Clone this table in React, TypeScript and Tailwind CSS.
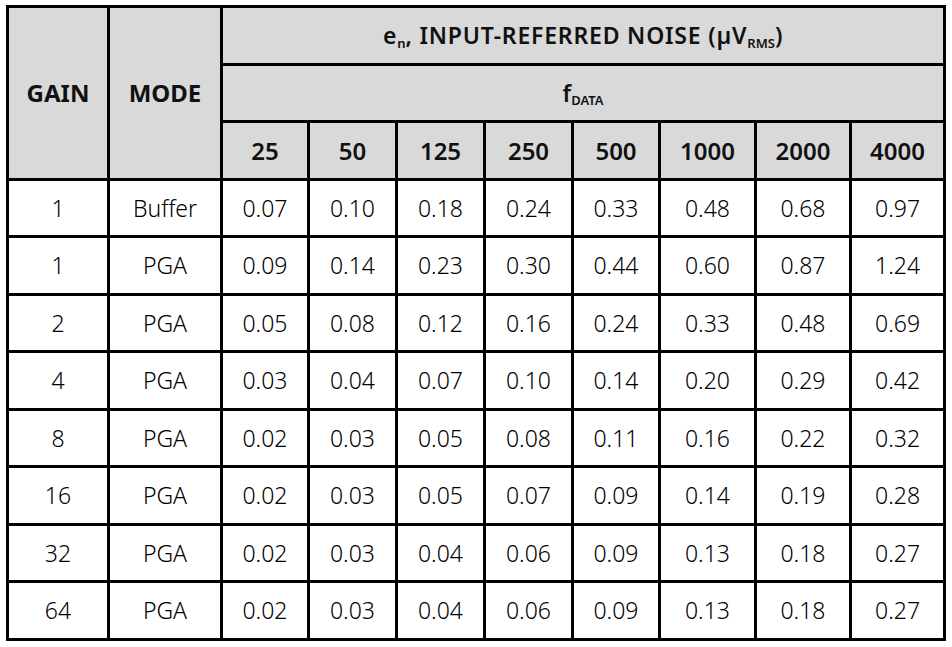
const colWidths = [101, 113, 87, 88, 88, 88, 87, 96, 95, 94];
const rates = ["25", "50", "125", "250", "500", "1000", "2000", "4000"];

const rows: { gain: string; mode: string; values: string[] }[] = [
  { gain: "1", mode: "Buffer", values: ["0.07", "0.10", "0.18", "0.24", "0.33", "0.48", "0.68", "0.97"] },
  { gain: "1", mode: "PGA", values: ["0.09", "0.14", "0.23", "0.30", "0.44", "0.60", "0.87", "1.24"] },
  { gain: "2", mode: "PGA", values: ["0.05", "0.08", "0.12", "0.16", "0.24", "0.33", "0.48", "0.69"] },
  { gain: "4", mode: "PGA", values: ["0.03", "0.04", "0.07", "0.10", "0.14", "0.20", "0.29", "0.42"] },
  { gain: "8", mode: "PGA", values: ["0.02", "0.03", "0.05", "0.08", "0.11", "0.16", "0.22", "0.32"] },
  { gain: "16", mode: "PGA", values: ["0.02", "0.03", "0.05", "0.07", "0.09", "0.14", "0.19", "0.28"] },
  { gain: "32", mode: "PGA", values: ["0.02", "0.03", "0.04", "0.06", "0.09", "0.13", "0.18", "0.27"] },
  { gain: "64", mode: "PGA", values: ["0.02", "0.03", "0.04", "0.06", "0.09", "0.13", "0.18", "0.27"] },
];

const cell = "border-r-[3px] border-b-[3px] border-black p-0 text-center align-middle";
const head = `${cell} bg-[#d9d9d9] text-[#111]`;
const body = `${cell} text-[23px] font-light text-black`;

export default function App() {
  return (
    <div className="min-h-screen bg-white pt-[5px] pl-[6px] font-['Noto_Sans','Open_Sans',sans-serif]">
      <table className="w-[940px] table-fixed border-separate border-spacing-0 border-l-[3px] border-t-[3px] border-black">
        <colgroup>
          {colWidths.map((w, i) => (
            <col key={i} style={{ width: w }} />
          ))}
        </colgroup>
        <thead>
          <tr className="h-[58px]">
            <th rowSpan={3} className={`${head} text-[24px] font-bold`}>
              GAIN
            </th>
            <th rowSpan={3} className={`${head} text-[24px] font-bold`}>
              MODE
            </th>
            <th colSpan={8} className={`${head} text-[23px] font-semibold tracking-[0.8px]`}>
              e<sub className="text-[13px] tracking-normal">n</sub>, INPUT-REFERRED NOISE (µV
              <sub className="text-[13px] tracking-normal">RMS</sub>)
            </th>
          </tr>
          <tr className="h-[57px]">
            <th colSpan={8} className={`${head} text-[23px] font-semibold`}>
              f<sub className="text-[13px]">DATA</sub>
            </th>
          </tr>
          <tr className="h-[58px]">
            {rates.map((r) => (
              <th key={r} className={`${head} text-[24px] font-semibold`}>
                {r}
              </th>
            ))}
          </tr>
        </thead>
        <tbody>
          {rows.map((row, i) => (
            <tr key={i} className={i % 2 === 0 ? "h-[57px]" : "h-[58px]"}>
              <td className={body}>{row.gain}</td>
              <td className={body}>{row.mode}</td>
              {row.values.map((v, j) => (
                <td key={j} className={body}>
                  {v}
                </td>
              ))}
            </tr>
          ))}
        </tbody>
      </table>
    </div>
  );
}
